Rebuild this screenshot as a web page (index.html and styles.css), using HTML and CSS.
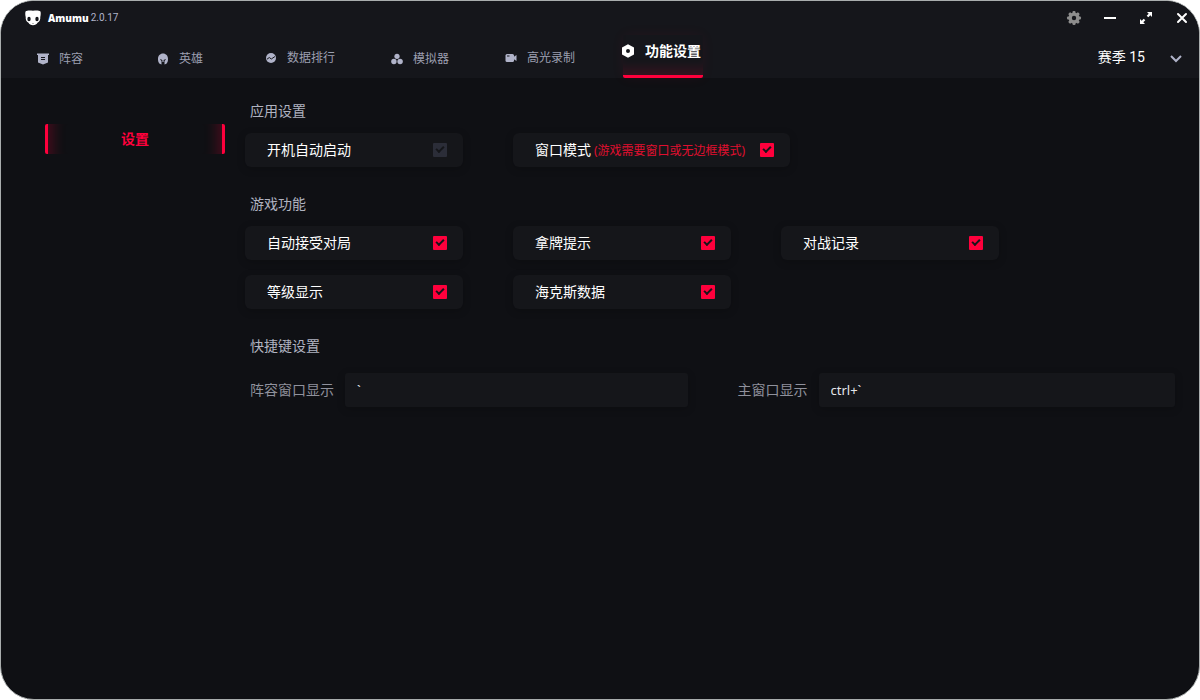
FILE: index.html
```
<!DOCTYPE html>
<html lang="zh-CN">
<head>
  <meta charset="UTF-8">
  <meta name="viewport" content="width=device-width, initial-scale=1.0">
  <title>Amumu</title>
  <link rel="stylesheet" href="styles.css">
</head>
<body>
  <div class="window">
    <header class="header">
      <div class="titlebar">
        <div class="brand">
          <svg class="logo" width="16" height="16" viewBox="0 0 16 16">
            <path fill="#fff" d="M0.5 1.500C2.500 0.200 5 0.700 8 0.700s5.500-.5 7.500.8c.4 1.500.3 3.500-.2 5.500.2 2.500-.6 4.600-2.800 5.800-.5 1.600-2.600 2.400-4.500 2.400s-4-.8-4.500-2.400C1.300 11.600.5 9.500.7 7 .2 5 .1 3 .5 1.500z"/>
            <ellipse cx="4" cy="9" rx="1.700" ry="2.300" fill="#15161b"/>
            <ellipse cx="12" cy="9" rx="1.700" ry="2.300" fill="#15161b"/>
            <path fill="#777" d="M7 13h2l-1 1z"/>
          </svg>
          <span class="name">Amumu</span>
          <span class="version">2.0.17</span>
        </div>
        <div class="controls">
          <button class="control" aria-label="设置">
            <svg width="16" height="16" viewBox="0 0 16 16">
              <g fill="#8d8d8d">
                <circle cx="8" cy="8" r="5.500"/>
                <rect x="6.500" y="1" width="3" height="14" rx="1"/>
                <rect x="6.500" y="1" width="3" height="14" rx="1" transform="rotate(45 8 8)"/>
                <rect x="6.500" y="1" width="3" height="14" rx="1" transform="rotate(90 8 8)"/>
                <rect x="6.500" y="1" width="3" height="14" rx="1" transform="rotate(135 8 8)"/>
              </g>
              <circle cx="8" cy="8" r="2.200" fill="#15161b"/>
            </svg>
          </button>
          <button class="control" aria-label="最小化">
            <svg width="16" height="16" viewBox="0 0 16 16"><path d="M2 8h12" stroke="#fff" stroke-width="2"/></svg>
          </button>
          <button class="control" aria-label="最大化">
            <svg width="16" height="16" viewBox="0 0 16 16">
              <path d="M9 2h5v5l-1.700-1.700-2 2-1.600-1.600 2-2zM7 14H2V9l1.700 1.700 2-2 1.600 1.600-2 2z" fill="#fff"/>
            </svg>
          </button>
          <button class="control" aria-label="关闭">
            <svg width="16" height="16" viewBox="0 0 16 16"><path d="M4 4l8 8M12 4l-8 8" stroke="#fff" stroke-width="2" stroke-linecap="round"/></svg>
          </button>
        </div>
      </div>

      <div class="navbar">
        <nav class="tabs">
          <a class="tab" href="#">
            <svg width="12" height="12" viewBox="0 0 12 12">
              <path fill="#b0b3c9" d="M0 .5h12V2h-1v7.500L6 11.500 1 9.500V2H0z"/>
              <path d="M4 4.500h4M4 6.500h4" stroke="#15161b"/>
            </svg>
            阵容
          </a>
          <a class="tab" href="#">
            <svg width="12" height="12" viewBox="0 0 12 12">
              <path fill="#b0b3c9" d="M6 .5c3 0 5 2.300 5 5.500 0 2-.4 3.700-1.600 4.800L7.500 11.500V8l1.200-1.200V6L6.600 7v2H5.400V7L3.300 6v.8L4.500 8v3.500L2.600 10.800C1.400 9.700 1 8 1 6 1 2.800 3 .5 6 .5z"/>
            </svg>
            英雄
          </a>
          <a class="tab raised" href="#">
            <svg width="12" height="12" viewBox="0 0 12 12">
              <circle cx="6" cy="6" r="5" fill="#b0b3c9"/>
              <path d="M2 7.200l2.300-1.700 2 1.500L10 4.500" fill="none" stroke="#15161b" stroke-width="1"/>
            </svg>
            数据排行
          </a>
          <a class="tab" href="#">
            <svg width="12" height="12" viewBox="0 0 12 12" fill="#b0b3c9">
              <circle cx="6" cy="3.300" r="2.600"/>
              <circle cx="2.900" cy="8.500" r="2.700"/>
              <circle cx="9.100" cy="8.500" r="2.700"/>
            </svg>
            模拟器
          </a>
          <a class="tab raised" href="#">
            <svg width="12" height="12" viewBox="0 0 12 12">
              <rect x="0.500" y="2" width="8.500" height="8" rx="1.500" fill="#b0b3c9"/>
              <path d="M8.500 5l3-2v6l-3-2z" fill="#b0b3c9"/>
              <path d="M2 4h2.500" stroke="#15161b"/>
            </svg>
            高光录制
          </a>
          <a class="tab active" href="#">
            <svg width="14" height="14" viewBox="0 0 14 14">
              <path fill="#fff" fill-rule="evenodd" d="M7 .2l6 3.400v6.800l-6 3.400-6-3.400V3.600zM7 5a2 2 0 1 0 0 4 2 2 0 0 0 0-4z"/>
            </svg>
            功能设置
          </a>
        </nav>
        <button class="season">
          赛季 15
          <svg width="12" height="12" viewBox="0 0 12 12"><path d="M1 4L6 9l5-5" fill="none" stroke="#b0b3c9" stroke-width="2"/></svg>
        </button>
      </div>
    </header>

    <div class="content">
      <aside class="sidebar">
        <a class="side-item" href="#">设置</a>
      </aside>

      <main class="settings">
        <section class="section">
          <h2>应用设置</h2>
          <div class="cards">
            <label class="card">开机自动启动<input type="checkbox"></label>
            <label class="card wide"><span>窗口模式<small>(游戏需要窗口或无边框模式)</small></span><input type="checkbox" checked></label>
          </div>
        </section>

        <section class="section">
          <h2>游戏功能</h2>
          <div class="cards">
            <label class="card">自动接受对局<input type="checkbox" checked></label>
            <label class="card">拿牌提示<input type="checkbox" checked></label>
            <label class="card">对战记录<input type="checkbox" checked></label>
            <label class="card">等级显示<input type="checkbox" checked></label>
            <label class="card">海克斯数据<input type="checkbox" checked></label>
          </div>
        </section>

        <section class="section">
          <h2>快捷键设置</h2>
          <div class="hotkeys">
            <div class="hotkey">
              <label for="lineupKey">阵容窗口显示</label>
              <input id="lineupKey" type="text" value="`">
            </div>
            <div class="hotkey">
              <label for="mainKey">主窗口显示</label>
              <input id="mainKey" type="text" value="ctrl+`">
            </div>
          </div>
        </section>
      </main>
    </div>
  </div>
</body>
</html>
```
FILE: styles.css
```
* {
  box-sizing: border-box;
}
body {
  margin: 0;
  background-color: #fff;
  font-family: "Noto Sans", "Noto Sans CJK SC", sans-serif;
  font-size: 14px;
  line-height: 20px;
  color: #fff;
}
a {
  color: inherit;
  text-decoration: none;
}
button {
  padding: 0;
  border: none;
  background: none;
  color: inherit;
  font: inherit;
  cursor: pointer;
}
svg {
  display: block;
  flex: none;
}

.window {
  min-height: 100vh;
  border: 1px solid #a9adad;
  border-radius: 34px;
  background-color: #0f1014;
  overflow: hidden;
}

/* Header */
.header {
  background-color: #15161b;
}
.titlebar {
  display: flex;
  justify-content: space-between;
  align-items: center;
  height: 34px;
  padding: 0 9px 0 24px;
}
.brand {
  display: flex;
  align-items: center;
}
.name {
  margin-left: 7px;
  font-size: 10px;
  font-weight: 900;
}
.version {
  margin-left: 2px;
  font-family: Roboto, sans-serif;
  font-size: 10px;
  color: #b0b3c9;
}
.controls {
  display: flex;
  gap: 20px;
}

/* Tabs */
.navbar {
  display: flex;
  justify-content: space-between;
  height: 43px;
}
.tabs {
  display: flex;
}
.tab {
  display: flex;
  justify-content: center;
  align-items: center;
  gap: 10px;
  width: 120px;
  padding: 4px 2px 0 0;
  font-size: 12px;
  color: #9c9fb0;
}
.tab.raised {
  padding-top: 2px;
}
.tab.active {
  width: 80px;
  margin-left: 22px;
  padding: 0 4px 8px 0;
  border-bottom: 3px solid #ff003c;
  border-radius: 2px;
  box-shadow: inset 0 -14px 12px -8px rgba(255, 0, 60, 0.15), 0 0 14px rgba(255, 0, 60, 0.06);
  font-size: 14px;
  font-weight: bold;
  color: #fff;
  white-space: nowrap;
}
.season {
  display: flex;
  align-items: center;
  gap: 25px;
  margin-right: 17px;
  font-family: Roboto, "Noto Sans CJK SC", sans-serif;
}
.season svg {
  margin-top: 2px;
}

/* Page body */
.content {
  display: flex;
  padding: 23px 24px 24px 44px;
}
.sidebar {
  flex: none;
  width: 180px;
  margin-right: 20px;
  padding-top: 23px;
}
.side-item {
  display: block;
  height: 30px;
  border: solid #ff003c;
  border-width: 0 3px;
  border-radius: 2px;
  box-shadow: inset 18px 0 14px -14px rgba(255, 0, 60, 0.25), inset -18px 0 14px -14px rgba(255, 0, 60, 0.25);
  line-height: 30px;
  text-align: center;
  font-weight: bold;
  color: #ff003c;
}
.settings {
  flex: 1;
}
.section {
  margin-bottom: 27px;
}
h2 {
  margin: 0 0 12px 5px;
  font-size: 14px;
  font-weight: normal;
  color: #b0b3c0;
}
.cards {
  display: flex;
  flex-wrap: wrap;
  gap: 15px 50px;
}
.card {
  display: flex;
  justify-content: space-between;
  align-items: center;
  width: 218px;
  height: 34px;
  padding: 0 16px 0 22px;
  border-radius: 6px;
  background-color: #15161a;
  box-shadow: 0 2px 8px rgba(0, 0, 0, 0.2);
}
.card.wide {
  width: 277px;
}
.card small {
  margin-left: 3px;
  font-size: 12px;
  color: #e00f2f;
}
.card input {
  appearance: none;
  display: grid;
  place-items: center;
  width: 14px;
  height: 14px;
  margin: 0;
  border-radius: 1px;
  background-color: #2b2d38;
}
.card input::after {
  content: "";
  box-sizing: border-box;
  width: 8px;
  height: 5px;
  margin-bottom: 3px;
  border: solid #15161a;
  border-width: 0 0 2px 2px;
  transform: rotate(-45deg);
}
.card input:checked {
  background-color: #ff003c;
}

/* Hotkeys */
.hotkeys {
  display: grid;
  grid-template-columns: 1fr 1fr;
  gap: 50px;
  margin: 17px 0 0 5px;
}
.hotkey {
  display: flex;
  align-items: center;
  gap: 11px;
  color: #8f919c;
}
.hotkey input {
  flex: 1;
  min-width: 0;
  height: 34px;
  padding: 0 12px;
  border: none;
  border-radius: 3px;
  background-color: #15161a;
  box-shadow: 0 2px 8px rgba(0, 0, 0, 0.2);
  font: inherit;
  font-size: 13px;
  color: #e4e5ea;
}
```
